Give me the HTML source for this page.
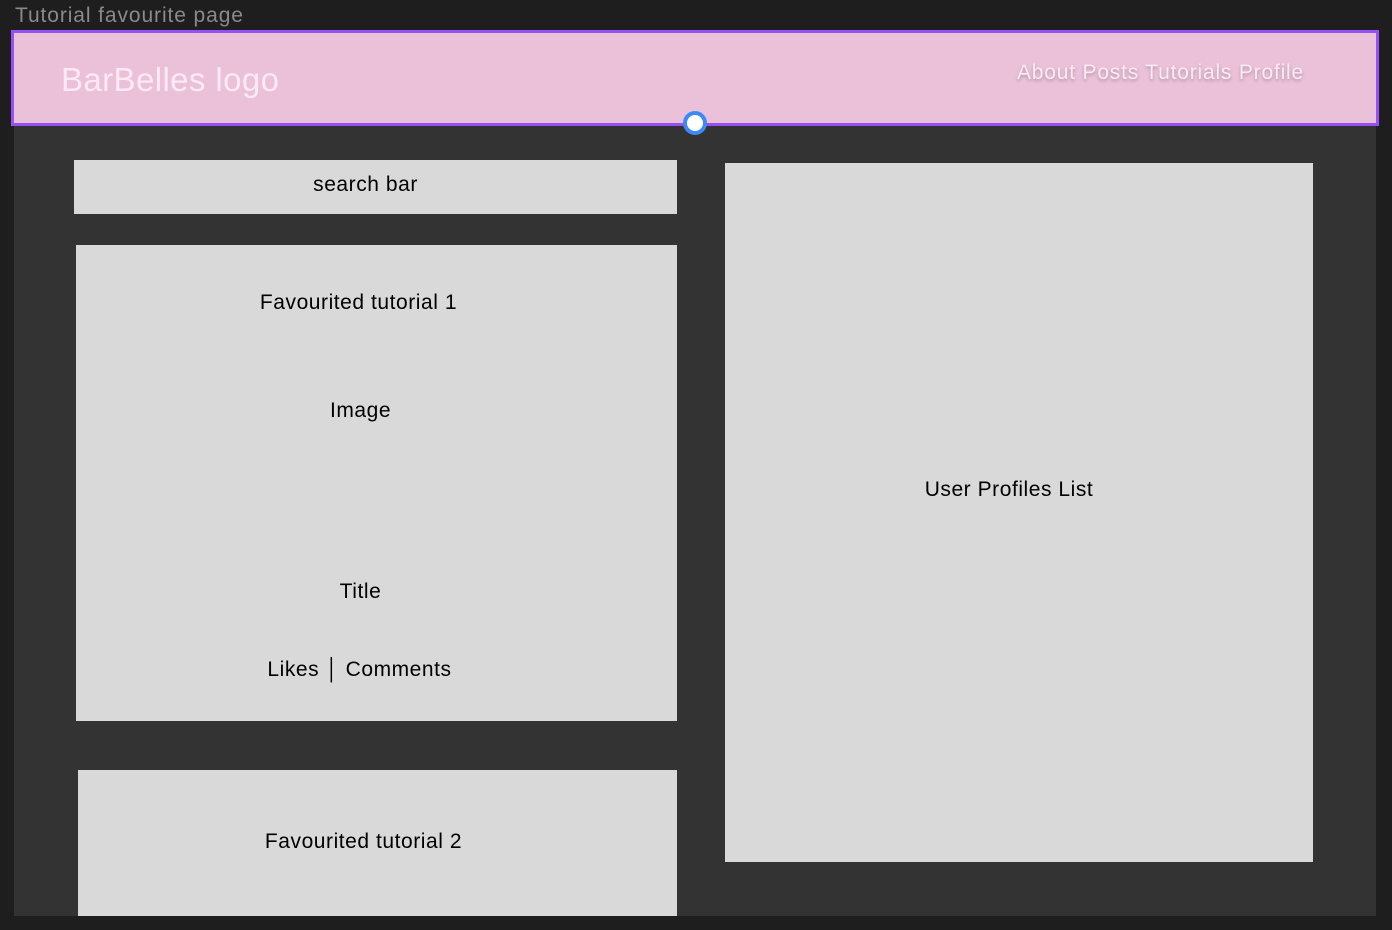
<!DOCTYPE html>
<html><head><style>
*{margin:0;padding:0;box-sizing:border-box}
body{width:1392px;height:930px;background:#1e1e1e;position:relative;overflow:hidden;font-family:"Liberation Sans",sans-serif}
.a{position:absolute}
.box{position:absolute;background:#d9d9d9;color:#000;font-size:21px;letter-spacing:0.55px}
.t{position:absolute;left:0;right:0;text-align:center;white-space:nowrap}
</style></head><body>
<div class="a" style="left:15px;top:4px;font-size:21px;letter-spacing:0.9px;color:#8a8a8a">Tutorial favourite page</div>
<div class="a" style="left:14px;top:30px;width:1362px;height:886px;background:#333"></div>
<div class="a" style="left:11px;top:30px;width:1368px;height:96px;background:#eac1d9;border:3px solid #9650f5"></div>
<div class="a" style="left:61px;top:61px;font-size:33px;letter-spacing:0.4px;color:#fbe9f3">BarBelles logo</div>
<div class="a" style="left:1017px;top:61px;font-size:21px;letter-spacing:0.8px;color:#fbe9f3;text-shadow:0 2px 3px rgba(0,0,0,0.25)">About Posts Tutorials Profile</div>
<div class="a" style="left:683px;top:111px;width:24px;height:24px;border-radius:50%;background:#fff;border:4px solid #3d8af7"></div>
<div class="box" style="left:74px;top:160px;width:603px;height:54px"><div class="t" style="top:13px;left:-20px">search bar</div></div>
<div class="box" style="left:76px;top:245px;width:601px;height:476px">
<div class="t" style="top:46px;left:-36px">Favourited tutorial 1</div>
<div class="t" style="top:154px;left:-32px">Image</div>
<div class="t" style="top:335px;left:-32px">Title</div>
<div class="t" style="top:413px;left:-34px">Likes │ Comments</div>
</div>
<div class="box" style="left:78px;top:770px;width:599px;height:146px"><div class="t" style="top:60px;left:-28px">Favourited tutorial 2</div></div>
<div class="box" style="left:725px;top:163px;width:588px;height:699px"><div class="t" style="top:315px;left:-20px">User Profiles List</div></div>
</body></html>
